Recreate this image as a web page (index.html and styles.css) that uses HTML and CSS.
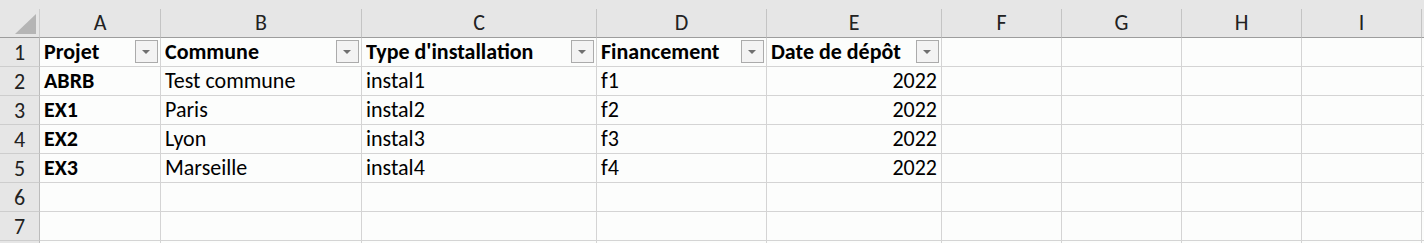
FILE: index.html
```html
<!DOCTYPE html>
<html lang="fr">
<head>
<meta charset="utf-8">
<title>Projets</title>
<link rel="stylesheet" href="styles.css">
</head>
<body>
<div class="sheet">
  <div class="top-strip"></div>
  <div class="grid">
    <div class="corner"><span class="corner-tri"></span></div>
    <div class="colhead">A</div>
    <div class="colhead">B</div>
    <div class="colhead">C</div>
    <div class="colhead">D</div>
    <div class="colhead">E</div>
    <div class="colhead">F</div>
    <div class="colhead">G</div>
    <div class="colhead">H</div>
    <div class="colhead">I</div>
    <div class="colhead colhead-rest"></div>

    <div class="rowhead">1</div>
    <div class="cell bold has-filter"><span class="txt">Projet</span><span class="filter"></span></div>
    <div class="cell bold has-filter"><span class="txt">Commune</span><span class="filter"></span></div>
    <div class="cell bold has-filter"><span class="txt">Type d'installation</span><span class="filter"></span></div>
    <div class="cell bold has-filter"><span class="txt">Financement</span><span class="filter"></span></div>
    <div class="cell bold has-filter"><span class="txt">Date de dépôt</span><span class="filter"></span></div>
    <div class="cell"></div><div class="cell"></div><div class="cell"></div><div class="cell"></div><div class="cell rest"></div>

    <div class="rowhead">2</div>
    <div class="cell bold">ABRB</div>
    <div class="cell">Test commune</div>
    <div class="cell">instal1</div>
    <div class="cell">f1</div>
    <div class="cell num">2022</div>
    <div class="cell"></div><div class="cell"></div><div class="cell"></div><div class="cell"></div><div class="cell rest"></div>

    <div class="rowhead">3</div>
    <div class="cell bold">EX1</div>
    <div class="cell">Paris</div>
    <div class="cell">instal2</div>
    <div class="cell">f2</div>
    <div class="cell num">2022</div>
    <div class="cell"></div><div class="cell"></div><div class="cell"></div><div class="cell"></div><div class="cell rest"></div>

    <div class="rowhead">4</div>
    <div class="cell bold">EX2</div>
    <div class="cell">Lyon</div>
    <div class="cell">instal3</div>
    <div class="cell">f3</div>
    <div class="cell num">2022</div>
    <div class="cell"></div><div class="cell"></div><div class="cell"></div><div class="cell"></div><div class="cell rest"></div>

    <div class="rowhead">5</div>
    <div class="cell bold">EX3</div>
    <div class="cell">Marseille</div>
    <div class="cell">instal4</div>
    <div class="cell">f4</div>
    <div class="cell num">2022</div>
    <div class="cell"></div><div class="cell"></div><div class="cell"></div><div class="cell"></div><div class="cell rest"></div>

    <div class="rowhead">6</div>
    <div class="cell"></div><div class="cell"></div><div class="cell"></div><div class="cell"></div><div class="cell"></div>
    <div class="cell"></div><div class="cell"></div><div class="cell"></div><div class="cell"></div><div class="cell rest"></div>

    <div class="rowhead">7</div>
    <div class="cell"></div><div class="cell"></div><div class="cell"></div><div class="cell"></div><div class="cell"></div>
    <div class="cell"></div><div class="cell"></div><div class="cell"></div><div class="cell"></div><div class="cell rest"></div>

    <div class="rowhead"></div>
    <div class="cell"></div><div class="cell"></div><div class="cell"></div><div class="cell"></div><div class="cell"></div>
    <div class="cell"></div><div class="cell"></div><div class="cell"></div><div class="cell"></div><div class="cell rest"></div>
  </div>
</div>
</body>
</html>
```

FILE: styles.css
```css
* {
  box-sizing: border-box;
}

html, body {
  margin: 0;
  padding: 0;
  background: #fcfdfc;
  overflow: hidden;
}

.sheet {
  width: 1424px;
  height: 243px;
  overflow: hidden;
  font-family: "Carlito", "Lato", "Liberation Sans", sans-serif;
  font-size: 22px;
  color: #000;
}

.top-strip {
  height: 9px;
  background: #e6e6e6;
}

.grid {
  display: grid;
  grid-template-columns: 40px 121px 201px 235px 170px 175px 120px 120px 120px 120px 1fr;
  grid-auto-rows: 29px;
}

/* column header band */
.corner,
.colhead {
  background: #e6e6e6;
  border-right: 1px solid #c4c4c4;
  border-bottom: 1px solid #9d9d9d;
}

.corner {
  position: relative;
  border-right-color: #cdcdcd;
}

.corner-tri {
  position: absolute;
  right: 3px;
  bottom: 3px;
  width: 0;
  height: 0;
  border-style: solid;
  border-width: 0 0 20px 21px;
  border-color: transparent transparent #b5b5b5 transparent;
}

.colhead {
  color: #222;
  text-align: center;
  line-height: 28px;
}

.colhead-rest {
  border-right: none;
}

/* row number column */
.rowhead {
  background: #e6e6e6;
  color: #222;
  text-align: center;
  line-height: 28px;
  padding-top: 1px;
  border-right: 1px solid #bcbcbc;
  border-bottom: 1px solid #cdcdcd;
}

/* worksheet cells */
.cell {
  display: flex;
  align-items: flex-end;
  padding: 0 4px 1px 4px;
  line-height: 26px;
  white-space: nowrap;
  overflow: hidden;
  background: #fcfdfc;
  border-right: 1px solid #d4d4d4;
  border-bottom: 1px solid #d4d4d4;
}

.cell.rest {
  border-right: none;
}

.bold {
  font-weight: 700;
}

.num {
  justify-content: flex-end;
}

/* autofilter dropdown button */
.has-filter {
  padding-right: 2px;
}

.txt {
  flex: 1;
  overflow: hidden;
}

.filter {
  position: relative;
  align-self: flex-start;
  flex: none;
  width: 23px;
  height: 23px;
  margin-top: 2px;
  border: 1px solid #ababab;
  background: #f3f3f3;
}

.filter::after {
  content: "";
  position: absolute;
  left: 6px;
  top: 9px;
  border-style: solid;
  border-width: 4px 4px 0 4px;
  border-color: #6f6f6f transparent transparent transparent;
}
```
